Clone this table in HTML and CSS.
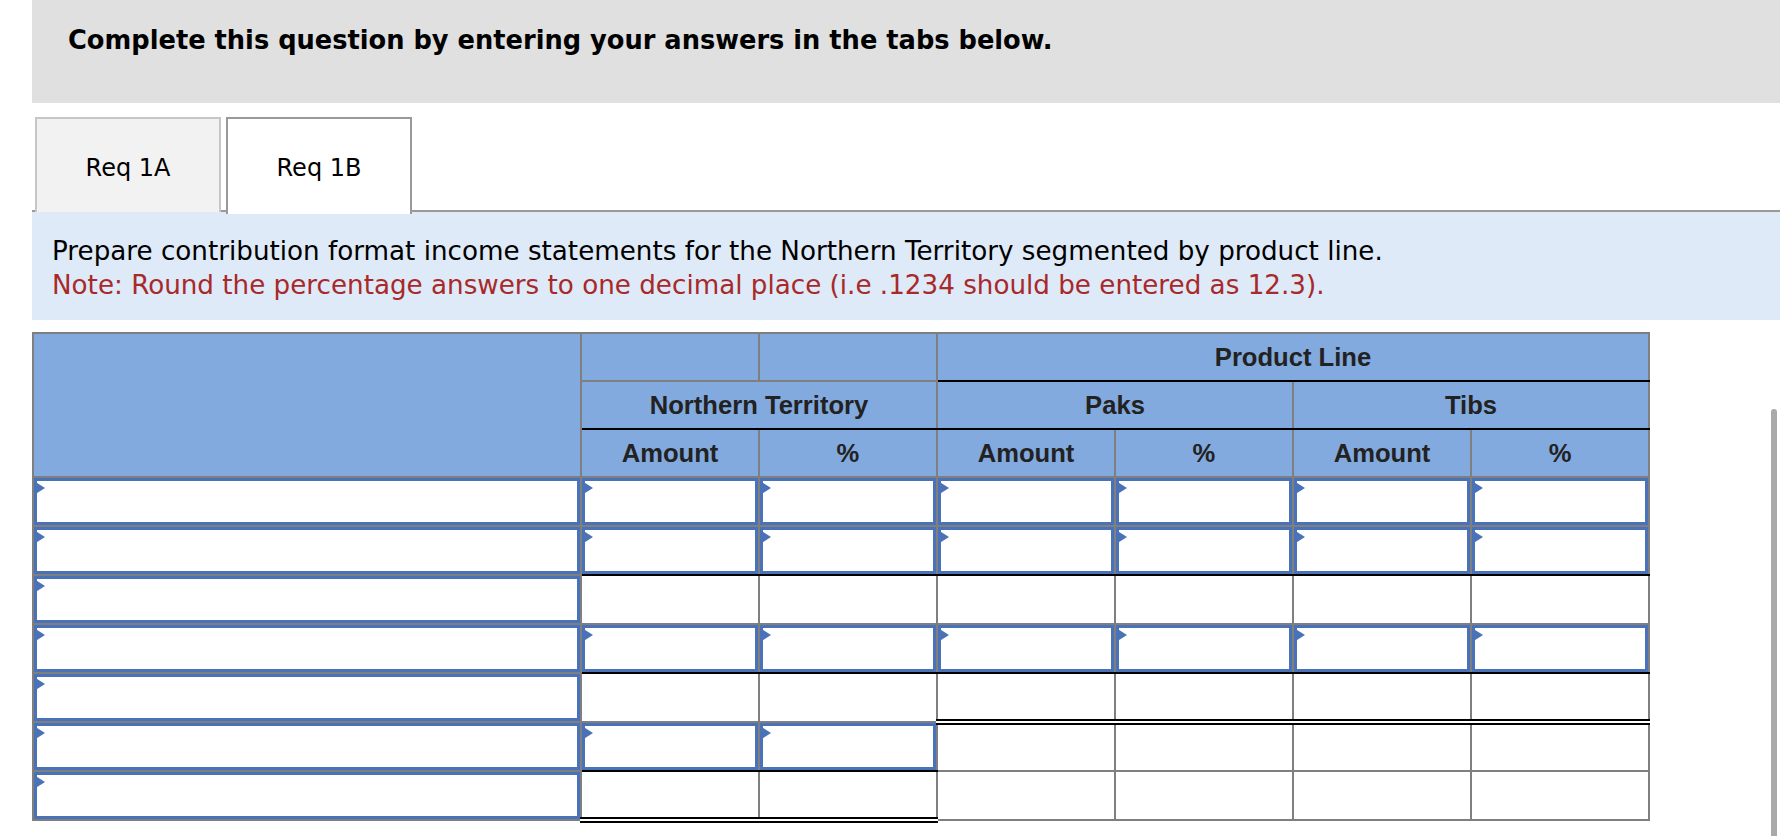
FILE: index.html
```html
<!DOCTYPE html>
<html lang="en">
<head>
<meta charset="utf-8">
<title>Req 1B</title>
<link rel="stylesheet" href="styles.css">
</head>
<body>
<div class="page">
  <div class="banner">
    <h1 class="banner-title">Complete this question by entering your answers in the tabs below.</h1>
  </div>

  <div class="tabs">
    <div class="tab">Req 1A</div>
    <div class="tab tab-active">Req 1B</div>
  </div>

  <div class="instructions">
    <p class="instr-main">Prepare contribution format income statements for the Northern Territory segmented by product line.</p>
    <p class="instr-note">Note: Round the percentage answers to one decimal place (i.e .1234 should be entered as 12.3).</p>
  </div>

  <table class="grid">
    <colgroup>
      <col class="c-label">
      <col class="c-num"><col class="c-num"><col class="c-num"><col class="c-num"><col class="c-num"><col class="c-num">
    </colgroup>
    <thead>
      <tr class="hrow">
        <th rowspan="3" class="hlabel"></th>
        <th></th>
        <th></th>
        <th colspan="4" class="b-black">Product Line</th>
      </tr>
      <tr class="hrow">
        <th colspan="2" class="b-black">Northern Territory</th>
        <th colspan="2" class="b-black">Paks</th>
        <th colspan="2" class="b-black">Tibs</th>
      </tr>
      <tr class="hrow">
        <th>Amount</th><th>%</th><th>Amount</th><th>%</th><th>Amount</th><th>%</th>
      </tr>
    </thead>
    <tbody>
      <tr class="drow">
        <td><div class="inp"></div></td>
        <td><div class="inp"></div></td><td><div class="inp"></div></td>
        <td><div class="inp"></div></td><td><div class="inp"></div></td>
        <td><div class="inp"></div></td><td><div class="inp"></div></td>
      </tr>
      <tr class="drow">
        <td><div class="inp"></div></td>
        <td class="b-black"><div class="inp"></div></td><td class="b-black"><div class="inp"></div></td>
        <td class="b-black"><div class="inp"></div></td><td class="b-black"><div class="inp"></div></td>
        <td class="b-black"><div class="inp"></div></td><td class="b-black"><div class="inp"></div></td>
      </tr>
      <tr class="drow">
        <td><div class="inp"></div></td>
        <td></td><td></td><td></td><td></td><td></td><td></td>
      </tr>
      <tr class="drow">
        <td><div class="inp"></div></td>
        <td class="b-black"><div class="inp"></div></td><td class="b-black"><div class="inp"></div></td>
        <td class="b-black"><div class="inp"></div></td><td class="b-black"><div class="inp"></div></td>
        <td class="b-black"><div class="inp"></div></td><td class="b-black"><div class="inp"></div></td>
      </tr>
      <tr class="drow">
        <td><div class="inp"></div></td>
        <td></td><td></td>
        <td class="b-double"></td><td class="b-double"></td><td class="b-double"></td><td class="b-double"></td>
      </tr>
      <tr class="drow">
        <td><div class="inp"></div></td>
        <td class="b-black"><div class="inp"></div></td><td class="b-black"><div class="inp"></div></td>
        <td></td><td></td><td></td><td></td>
      </tr>
      <tr class="drow">
        <td><div class="inp"></div></td>
        <td class="b-double"></td><td class="b-double"></td>
        <td></td><td></td><td></td><td></td>
      </tr>
    </tbody>
  </table>
</div>
<div class="scroll-thumb"></div>
</body>
</html>
```

FILE: styles.css
```css
html, body {
  margin: 0;
  padding: 0;
  background: #ffffff;
  overflow: hidden;
}

body {
  width: 1780px;
  height: 836px;
  font-family: "DejaVu Sans", Verdana, sans-serif;
  color: #000;
}

.page {
  padding-left: 32px;
}

.banner {
  background: #e0e0e0;
  height: 103px;
  box-sizing: border-box;
  padding: 24px 0 0 36px;
}

.banner-title {
  margin: 0;
  font-size: 25.7px;
  line-height: 32px;
  font-weight: bold;
}

.tabs {
  display: flex;
  gap: 5px;
  margin-top: 14px;
  padding-left: 3px;
  border-bottom: 2px solid #999999;
  height: 95px;
  box-sizing: border-box;
}

.tab {
  width: 186px;
  height: 95px;
  box-sizing: border-box;
  border: 2px solid #c6c6c6;
  border-bottom: none;
  background: #f2f2f2;
  display: flex;
  align-items: center;
  justify-content: center;
  font-size: 24px;
  padding-top: 4px;
}

.tab-active {
  background: #ffffff;
  border-color: #9a9a9a;
  height: 97px;
  padding-top: 2px;
  position: relative;
}

.instructions {
  background: #deeaf7;
  padding: 22px 0 18px 20px;
}

.instructions p {
  margin: 0;
  font-size: 26.2px;
  line-height: 34px;
}

.instr-note {
  color: #a8292a;
}

.grid {
  margin-top: 12px;
  border-collapse: collapse;
  table-layout: fixed;
  width: 1616px;
  border: 2px solid #7f7f7f;
}

.c-label { width: 548px; }
.c-num { width: 178px; }

.grid th,
.grid td {
  border: 2px solid #7f7f7f;
  padding: 0;
}

.grid th {
  background: #82aade;
  font-family: "Liberation Sans", Arial, sans-serif;
  font-size: 25.6px;
  font-weight: bold;
  color: #222222;
  text-align: center;
  vertical-align: middle;
}

.hrow { height: 48px; }
.drow { height: 49px; }

.grid td {
  background: #ffffff;
  vertical-align: top;
}

.grid .b-black { border-bottom: 2px solid #000000; }
.grid .b-double { border-bottom: 6px double #000000; }

.inp {
  position: relative;
  height: 47px;
  box-sizing: border-box;
  border: 3px solid #4a72b8;
  background: #ffffff;
}

.inp::before {
  content: "";
  position: absolute;
  left: -3px;
  top: 0;
  width: 0;
  height: 0;
  border-left: 11px solid #4a72b8;
  border-top: 7px solid transparent;
  border-bottom: 7px solid transparent;
}

.scroll-thumb {
  position: fixed;
  right: 3px;
  top: 409px;
  bottom: -4px;
  width: 6px;
  border-radius: 3px;
  background: #a9a9a9;
}
```
